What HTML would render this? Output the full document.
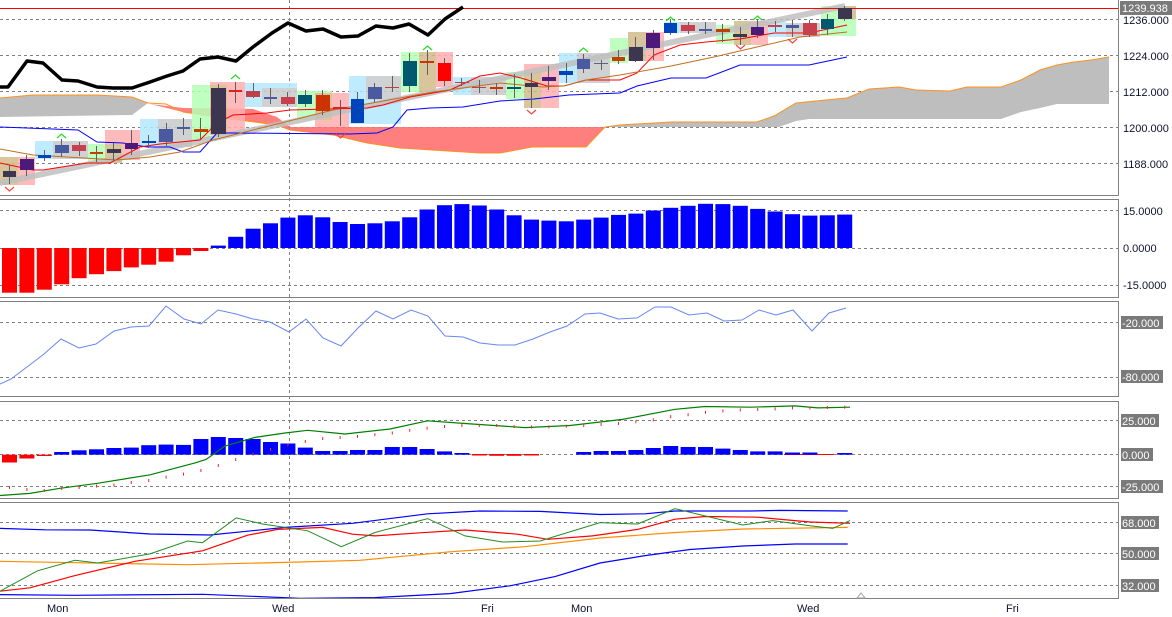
<!DOCTYPE html>
<html><head><meta charset="utf-8"><style>
html,body{margin:0;padding:0;background:#fff;width:1172px;height:617px;overflow:hidden}
svg{display:block}
text{font-family:"Liberation Sans",sans-serif;font-size:11px}
</style></head><body>
<svg width="1172" height="617" viewBox="0 0 1172 617" xmlns="http://www.w3.org/2000/svg">
<rect width="1172" height="617" fill="#fff"/>
<!-- grid -->
<g stroke="#808080" stroke-dasharray="3,3" stroke-width="1">
<line x1="0" y1="19.5" x2="1118" y2="19.5"/><line x1="0" y1="55.5" x2="1118" y2="55.5"/><line x1="0" y1="91.5" x2="1118" y2="91.5"/><line x1="0" y1="127.5" x2="1118" y2="127.5"/><line x1="0" y1="163.5" x2="1118" y2="163.5"/>
<line x1="0" y1="210.5" x2="1118" y2="210.5"/><line x1="0" y1="248.5" x2="1118" y2="248.5"/><line x1="0" y1="285.5" x2="1118" y2="285.5"/>
<line x1="0" y1="322.5" x2="1118" y2="322.5"/><line x1="0" y1="377.5" x2="1118" y2="377.5"/>
<line x1="0" y1="420.5" x2="1118" y2="420.5"/><line x1="0" y1="454.5" x2="1118" y2="454.5"/><line x1="0" y1="486.5" x2="1118" y2="486.5"/>
<line x1="0" y1="522.5" x2="1118" y2="522.5"/><line x1="0" y1="553.5" x2="1118" y2="553.5"/><line x1="0" y1="585.5" x2="1118" y2="585.5"/>
<line x1="289.5" y1="0" x2="289.5" y2="600"/>
</g>
<!-- clouds -->
<polygon fill="#bebebe" points="0,98 33,95 97,95 132,97 148,103 132,115 0,117"/>
<polygon fill="#ff7070" opacity="0.9" points="150,104 183,108 253,109 277,117 290,127 605,127 586,147 532,147 500,153 480,153 400,148 367,143 333,135 290,130 277,125 217,117 183,112"/>
<polyline fill="none" stroke="#ff9020" stroke-width="1" points="0,98 33,95 97,95 132,97 148,103 166,104 183,112 217,117 277,125 290,130 333,135 367,143 400,148 480,153 500,153 532,147 586,147 605,127"/>
<polygon fill="#bebebe" points="605,127 620,125 671,122 757,122 774,116 796,103 826,100 847,98 869,89 899,87 916,90 950,91 967,87 1001,87 1021,80 1040,70 1057,65 1074,62 1091,60 1109,57 1109,104 1057,104 1040,108 1021,112 1001,119 809,119 796,121 779,127"/>
<polyline fill="none" stroke="#ff9020" stroke-width="1" points="605,127 620,125 671,122 757,122 774,116 796,103 826,100 847,98 869,89 899,87 916,90 950,91 967,87 1001,87 1021,80 1040,70 1057,65 1074,62 1091,60 1109,57"/>
<polyline fill="none" stroke="#909090" stroke-width="1" points="0,117 132,115 148,103 0,0" opacity="0"/>
<!-- candle backgrounds -->
<g opacity="0.85">
<rect x="0" y="157" width="18" height="28" fill="#d2bc8a"/><rect x="18" y="157" width="17" height="28" fill="#ffb0b0"/>
<rect x="35" y="141" width="18" height="18" fill="#b4e8ff"/><rect x="53" y="141" width="35" height="18" fill="#c8cacc"/>
<rect x="88" y="144" width="17" height="19" fill="#b4ffb4"/><rect x="105" y="130" width="35" height="30" fill="#ffb0b0"/><rect x="105" y="144" width="17" height="19" fill="#d2bc8a"/>
<rect x="140" y="119" width="18" height="28" fill="#b4e8ff"/><rect x="158" y="119" width="34" height="28" fill="#c8cacc"/>
<rect x="192" y="85" width="18" height="55" fill="#b4ffb4"/><rect x="210" y="82" width="35" height="53" fill="#ffb0b0"/><rect x="210" y="85" width="17" height="50" fill="#d2bc8a"/>
<rect x="245" y="83" width="52" height="24" fill="#b4e8ff"/><rect x="262" y="88" width="35" height="19" fill="#c8cacc"/>
<rect x="297" y="91" width="35" height="29" fill="#b4ffb4"/><rect x="315" y="93" width="34" height="34" fill="#ffb0b0"/><rect x="315" y="93" width="17" height="27" fill="#d2bc8a"/>
<rect x="349" y="76" width="52" height="48" fill="#b4e8ff"/><rect x="366" y="76" width="35" height="24" fill="#c8cacc"/>
<rect x="401" y="52" width="35" height="40" fill="#b4ffb4"/><rect x="419" y="52" width="17" height="40" fill="#d2bc8a"/><rect x="436" y="52" width="17" height="35" fill="#ffb0b0"/>
<rect x="453" y="77" width="18" height="18" fill="#b4e8ff"/><rect x="471" y="77" width="40" height="18" fill="#c8cacc"/>
<rect x="506" y="72" width="18" height="27" fill="#b4ffb4"/><rect x="524" y="64" width="35" height="44" fill="#ffb0b0"/><rect x="524" y="72" width="17" height="36" fill="#d2bc8a"/>
<rect x="559" y="53" width="18" height="30" fill="#b4e8ff"/><rect x="577" y="53" width="33" height="30" fill="#c8cacc"/>
<rect x="610" y="38" width="18" height="25" fill="#b4ffb4"/><rect x="628" y="32" width="36" height="29" fill="#ffb0b0"/><rect x="628" y="32" width="18" height="29" fill="#d2bc8a"/>
<rect x="664" y="22" width="52" height="11" fill="#c8cacc"/><rect x="664" y="22" width="16" height="11" fill="#b4e8ff"/>
<rect x="716" y="25" width="18" height="19" fill="#b4ffb4"/><rect x="734" y="21" width="34" height="24" fill="#ffb0b0"/><rect x="734" y="21" width="17" height="24" fill="#d2bc8a"/>
<rect x="768" y="22" width="18" height="15" fill="#b4e8ff"/><rect x="786" y="23" width="34" height="14" fill="#c8cacc"/>
<rect x="821" y="6" width="35" height="30" fill="#b4ffb4"/><rect x="839" y="6" width="17" height="13" fill="#d2bc8a"/>
</g>
<!-- regression band -->
<line x1="0" y1="183" x2="845" y2="6" stroke="#c0c0c0" stroke-width="6" opacity="0.85"/>
<!-- MAs -->
<polyline fill="none" stroke="#0000ff" stroke-width="1" points="0,127 27,128 78,130 97,142 123,143 147,147 170,147 183,152 200,152 217,133 233,133 350,134 377,133 393,127 407,110 430,108 463,107 500,101 534,99 569,95 620,93 637,86 671,78 706,78 740,65 809,65 847,57"/>
<polyline fill="none" stroke="#ff0000" stroke-width="1" points="0,163 33,170 43,170 87,163 110,163 140,147 160,144 180,142 200,140 217,123 233,115 267,113 290,110 367,108 383,105 400,100 410,97 450,90 480,76 500,73 521,78 547,86 564,86 586,80 620,80 637,73 654,55 680,45 706,42 740,39 774,33 809,33 847,25"/>
<polyline fill="none" stroke="#c07020" stroke-width="1" points="0,149 33,155 67,157 117,160 150,157 180,152 213,140 233,135 333,110 400,98 433,92 500,83 543,87 564,86 586,80 620,75 671,66 714,57 757,47 800,37 847,32"/>
<line x1="0" y1="8.5" x2="1118" y2="8.5" stroke="#ff0000" stroke-width="1"/>
<polyline fill="none" stroke="#000" stroke-width="3.5" stroke-linejoin="round" points="0,87 8,87 27,61 43,63 62,80 78,81 97,87 113,88 132,88 150,82 167,76 183,71 200,59 218,57 236,61 253,47 272,33 288,23 306,31 323,29 341,37 358,36 376,26 393,28 409,24 428,35 445,19 463,7"/>
<!-- candles: wick then body -->
<g stroke="#606060" stroke-width="1">
<line x1="9.5" y1="165" x2="9.5" y2="184"/><line x1="26.5" y1="155" x2="26.5" y2="176"/><line x1="44.5" y1="150" x2="44.5" y2="161"/><line x1="61.5" y1="139" x2="61.5" y2="157"/><line x1="79.5" y1="142" x2="79.5" y2="156"/><line x1="96.5" y1="146" x2="96.5" y2="162"/><line x1="113.5" y1="143" x2="113.5" y2="160"/><line x1="131.5" y1="130" x2="131.5" y2="155"/><line x1="148.5" y1="135" x2="148.5" y2="148"/><line x1="166.5" y1="123" x2="166.5" y2="146"/><line x1="183.5" y1="118" x2="183.5" y2="135"/><line x1="200.5" y1="118" x2="200.5" y2="139"/><line x1="218.5" y1="84" x2="218.5" y2="137"/><line x1="235.5" y1="82" x2="235.5" y2="103"/><line x1="253.5" y1="83" x2="253.5" y2="98"/><line x1="270.5" y1="88" x2="270.5" y2="104"/><line x1="287.5" y1="92" x2="287.5" y2="106"/><line x1="305.5" y1="90" x2="305.5" y2="107"/><line x1="322.5" y1="90" x2="322.5" y2="115"/><line x1="340.5" y1="100" x2="340.5" y2="126"/><line x1="357.5" y1="92" x2="357.5" y2="123"/><line x1="374.5" y1="83" x2="374.5" y2="102"/><line x1="392.5" y1="76" x2="392.5" y2="92"/><line x1="409.5" y1="53" x2="409.5" y2="92"/><line x1="427.5" y1="50" x2="427.5" y2="75"/><line x1="444.5" y1="58" x2="444.5" y2="86"/><line x1="461.5" y1="78" x2="461.5" y2="86"/><line x1="479.5" y1="80" x2="479.5" y2="93"/><line x1="496.5" y1="83" x2="496.5" y2="95"/><line x1="514.5" y1="74" x2="514.5" y2="98"/><line x1="531.5" y1="73" x2="531.5" y2="108"/><line x1="548.5" y1="66" x2="548.5" y2="90"/><line x1="566.5" y1="63" x2="566.5" y2="83"/><line x1="583.5" y1="54" x2="583.5" y2="73"/><line x1="601.5" y1="60" x2="601.5" y2="70"/><line x1="618.5" y1="50" x2="618.5" y2="64"/><line x1="635.5" y1="37" x2="635.5" y2="62"/><line x1="653.5" y1="30" x2="653.5" y2="60"/><line x1="670.5" y1="19" x2="670.5" y2="35"/><line x1="688.5" y1="22" x2="688.5" y2="34"/><line x1="705.5" y1="22" x2="705.5" y2="34"/><line x1="722.5" y1="24" x2="722.5" y2="42"/><line x1="740.5" y1="27" x2="740.5" y2="45"/><line x1="757.5" y1="20" x2="757.5" y2="38"/><line x1="775.5" y1="21" x2="775.5" y2="32"/><line x1="792.5" y1="20" x2="792.5" y2="37"/><line x1="809.5" y1="20" x2="809.5" y2="37"/><line x1="827.5" y1="14" x2="827.5" y2="35"/><line x1="844.5" y1="6" x2="844.5" y2="21"/>
</g>
<g>
<rect x="3" y="171" width="13" height="6" fill="#3c3650"/><rect x="20" y="159" width="14" height="11" fill="#4b1a7a"/><rect x="38" y="155" width="13" height="3" fill="#0044bb"/><rect x="55" y="145" width="14" height="8" fill="#4a5aa0"/><rect x="72" y="145" width="14" height="6" fill="#c84050"/><rect x="90" y="152" width="13" height="2" fill="#c04000"/><rect x="107" y="149" width="14" height="4" fill="#3c3650"/><rect x="125" y="143" width="13" height="6" fill="#4b1a7a"/><rect x="142" y="141" width="14" height="2" fill="#0044bb"/><rect x="159" y="129" width="14" height="13" fill="#4a5aa0"/><rect x="177" y="127" width="13" height="2" fill="#4a5aa0"/><rect x="194" y="129" width="14" height="3" fill="#c04000"/><rect x="211" y="88" width="15" height="46" fill="#3c3650"/><rect x="229" y="90" width="13" height="2" fill="#e02020"/><rect x="246" y="91" width="14" height="6" fill="#c0404a"/><rect x="264" y="97" width="13" height="2" fill="#4a5aa0"/><rect x="281" y="97" width="14" height="7" fill="#c84050"/><rect x="298" y="95" width="14" height="9" fill="#005870"/><rect x="316" y="95" width="14" height="16" fill="#cc3300"/><rect x="333" y="107" width="14" height="2" fill="#e02020"/><rect x="351" y="99" width="13" height="24" fill="#0044bb"/><rect x="368" y="87" width="14" height="12" fill="#4a5aa0"/><rect x="385" y="87" width="14" height="1" fill="#c04040"/><rect x="403" y="61" width="14" height="25" fill="#005870"/><rect x="420" y="61" width="14" height="2" fill="#cc3300"/><rect x="438" y="63" width="13" height="18" fill="#ff0000"/><rect x="455" y="82" width="14" height="1" fill="#c04040"/><rect x="472" y="87" width="14" height="1" fill="#c04040"/><rect x="490" y="87" width="13" height="2" fill="#cc3300"/><rect x="507" y="87" width="14" height="2" fill="#005870"/><rect x="525" y="83" width="13" height="4" fill="#3c3650"/><rect x="542" y="77" width="14" height="4" fill="#4b1a7a"/><rect x="559" y="71" width="14" height="4" fill="#0044bb"/><rect x="577" y="59" width="13" height="10" fill="#4a5aa0"/><rect x="594" y="63" width="14" height="1" fill="#606080"/><rect x="612" y="57" width="13" height="4" fill="#c04000"/><rect x="629" y="47" width="14" height="14" fill="#3c3650"/><rect x="646" y="33" width="14" height="15" fill="#4b1a7a"/><rect x="664" y="23" width="13" height="10" fill="#0044bb"/><rect x="681" y="25" width="14" height="6" fill="#c84050"/><rect x="699" y="29" width="13" height="2" fill="#4a5aa0"/><rect x="716" y="29" width="14" height="3" fill="#c04000"/><rect x="733" y="34" width="14" height="3" fill="#3c3650"/><rect x="751" y="27" width="13" height="8" fill="#4b1a7a"/><rect x="768" y="25" width="14" height="2" fill="#c84050"/><rect x="786" y="25" width="13" height="3" fill="#4a5aa0"/><rect x="803" y="23" width="14" height="12" fill="#c84050"/><rect x="821" y="19" width="13" height="10" fill="#005870"/><rect x="838" y="8" width="14" height="11" fill="#3c3650"/>
</g>
<!-- arrows -->
<g fill="none" stroke-width="1.2">
<polyline stroke="#20e020" points="57,138 61.5,134 66,138"/><polyline stroke="#20e020" points="231,41 235.5,37 240,41" transform="translate(0,38)"/><polyline stroke="#20e020" points="423,50 427.5,46 432,50"/><polyline stroke="#20e020" points="579,52 583.5,48 588,52"/><polyline stroke="#20e020" points="666,21 670.5,17 675,21"/><polyline stroke="#20e020" points="753,20 757.5,16 762,20"/>
<polyline stroke="#ff4040" points="5,187 9.5,191 14,187"/><polyline stroke="#ff4040" points="336,134 340.5,138 345,134"/><polyline stroke="#ff4040" points="527,110 531.5,114 536,110"/><polyline stroke="#ff4040" points="736,45 740.5,49 745,45"/><polyline stroke="#ff4040" points="788,39 792.5,43 797,39"/>
</g>
<!-- panel 2 bars -->
<g fill="#ff0000">
<rect x="2" y="248" width="15" height="44.7"/><rect x="19.4" y="248" width="15" height="44.7"/><rect x="36.8" y="248" width="15" height="41.7"/><rect x="54.2" y="248" width="15" height="36.3"/><rect x="71.6" y="248" width="15" height="30.2"/><rect x="89" y="248" width="15" height="26.2"/><rect x="106.4" y="248" width="15" height="23.1"/><rect x="123.8" y="248" width="15" height="19.4"/><rect x="141.2" y="248" width="15" height="16.7"/><rect x="158.6" y="248" width="15" height="13.7"/><rect x="176" y="248" width="15" height="7.3"/><rect x="193.4" y="248" width="15" height="3"/>
</g>
<g fill="#0000ff">
<rect x="210.8" y="245.6" width="15" height="2.4"/><rect x="228.2" y="236.8" width="15" height="11.2"/><rect x="245.6" y="228.7" width="15" height="19.3"/><rect x="263" y="223.3" width="15" height="24.7"/><rect x="280.4" y="217.6" width="15" height="30.4"/><rect x="297.8" y="215.3" width="15" height="32.7"/><rect x="315.2" y="217.3" width="15" height="30.7"/><rect x="332.6" y="222" width="15" height="26"/><rect x="350" y="224" width="15" height="24"/><rect x="367.4" y="223.3" width="15" height="24.7"/><rect x="384.8" y="221.3" width="15" height="26.7"/><rect x="402.2" y="217.3" width="15" height="30.7"/><rect x="419.6" y="209.5" width="15" height="38.5"/><rect x="437" y="205.2" width="15" height="42.8"/><rect x="454.4" y="204.1" width="15" height="43.9"/><rect x="471.8" y="205.5" width="15" height="42.5"/><rect x="489.2" y="209.5" width="15" height="38.5"/><rect x="506.6" y="215.3" width="15" height="32.7"/><rect x="524" y="219.6" width="15" height="28.4"/><rect x="541.4" y="220.6" width="15" height="27.4"/><rect x="558.8" y="221.3" width="15" height="26.7"/><rect x="576.2" y="219.6" width="15" height="28.4"/><rect x="593.6" y="217.6" width="15" height="30.4"/><rect x="611" y="214.9" width="15" height="33.1"/><rect x="628.4" y="213.6" width="15" height="34.4"/><rect x="645.8" y="210.5" width="15" height="37.5"/><rect x="663.2" y="207.8" width="15" height="40.2"/><rect x="680.6" y="205.8" width="15" height="42.2"/><rect x="698" y="203.8" width="15" height="44.2"/><rect x="715.4" y="204.1" width="15" height="43.9"/><rect x="732.8" y="205.8" width="15" height="42.2"/><rect x="750.2" y="208.9" width="15" height="39.1"/><rect x="767.6" y="211.5" width="15" height="36.5"/><rect x="785" y="214.2" width="15" height="33.8"/><rect x="802.4" y="215.6" width="15" height="32.4"/><rect x="819.8" y="215.3" width="15" height="32.7"/><rect x="837.2" y="214.6" width="15" height="33.4"/>
</g>
<!-- panel 3 line -->
<polyline fill="none" stroke="#6688ee" stroke-width="1" points="0,384 11,379 27,367 44,354 61,339 79,348 96,344 114,331 131,327 149,326 166,306 184,319 201,324 218,310 236,314 253,319 270,322 289,332 306,319 323,338 341,346 358,328 376,311 393,319 411,310 428,316 445,336 463,337 480,343 498,345 515,345 533,339 550,332 567,326 585,314 600,313 618,319 637,318 655,307 671,307 689,315 707,313 724,321 742,320 759,310 776,315 793,310 812,331 829,313 846,308"/>
<!-- panel 4 -->
<g fill="#ff0000"><rect x="2" y="454.7" width="15" height="7.8"/><rect x="19.4" y="454.7" width="15" height="3.8"/><rect x="36.8" y="454.7" width="15" height="1.3"/><rect x="471.8" y="454" width="15" height="1.5"/><rect x="489.2" y="454" width="15" height="1.8"/><rect x="506.6" y="454" width="15" height="1.8"/><rect x="524" y="454" width="15" height="1.5"/><rect x="784" y="454" width="50" height="1"/></g>
<g fill="#0000ff">
<rect x="54.2" y="452" width="15" height="2.7"/><rect x="71.6" y="450.3" width="15" height="4.4"/><rect x="89" y="449.3" width="15" height="5.4"/><rect x="106.4" y="448" width="15" height="6.7"/><rect x="123.8" y="447.6" width="15" height="7.1"/><rect x="141.2" y="445.2" width="15" height="9.5"/><rect x="158.6" y="444.6" width="15" height="10.1"/><rect x="176" y="444.9" width="15" height="9.8"/><rect x="193.4" y="439" width="15" height="15.7"/><rect x="210.8" y="437" width="15" height="17.7"/><rect x="228.2" y="438" width="15" height="16.7"/><rect x="245.6" y="439" width="15" height="15.7"/><rect x="263" y="442" width="15" height="12.7"/><rect x="280.4" y="443.5" width="15" height="11.2"/><rect x="297.8" y="447.6" width="15" height="7.1"/><rect x="315.2" y="451" width="15" height="3.7"/><rect x="332.6" y="451" width="15" height="3.7"/><rect x="350" y="450" width="15" height="4.7"/><rect x="367.4" y="450" width="15" height="4.7"/><rect x="384.8" y="447" width="15" height="7.7"/><rect x="402.2" y="447" width="15" height="7.7"/><rect x="419.6" y="449" width="15" height="5.7"/><rect x="437" y="451.4" width="15" height="3.3"/><rect x="454.4" y="453" width="15" height="1.7"/><rect x="576.2" y="452" width="15" height="2.7"/><rect x="593.6" y="451" width="15" height="3.7"/><rect x="611" y="451" width="15" height="3.7"/><rect x="628.4" y="450" width="15" height="4.7"/><rect x="645.8" y="448" width="15" height="6.7"/><rect x="663.2" y="446" width="15" height="8.7"/><rect x="680.6" y="447" width="15" height="7.7"/><rect x="698" y="447" width="15" height="7.7"/><rect x="715.4" y="448.6" width="15" height="6.1"/><rect x="732.8" y="450" width="15" height="4.7"/><rect x="750.2" y="451.4" width="15" height="3.3"/><rect x="767.6" y="451.4" width="15" height="3.3"/><rect x="785" y="452.5" width="15" height="2.2"/><rect x="802.4" y="452.5" width="15" height="2.2"/><rect x="837.2" y="453" width="15" height="1.7"/>
</g>
<polyline fill="none" stroke="#008000" stroke-width="1.2" points="0,495.5 30,493.4 60,488.3 97.5,483.3 150,474.8 195,462.9 206,459.5 225,446 255,437.4 285,433 307.6,430.3 345,434 390,429 427.6,420.8 465,423.5 525,427.6 570,425.5 622.6,419.4 675,409.3 705,406.5 750,407.2 795,405.9 817.7,407.9 850,407.2"/>
<g fill="#ff2020">
<rect x="9" y="486" width="1" height="3"/><rect x="26.4" y="488" width="1" height="3"/><rect x="43.8" y="489" width="1" height="3"/><rect x="61.2" y="487" width="1" height="3"/><rect x="78.6" y="486" width="1" height="3"/><rect x="96" y="484.5" width="1" height="3"/><rect x="113.4" y="483.5" width="1" height="3"/><rect x="130.8" y="481" width="1" height="3"/><rect x="148.2" y="479" width="1" height="3"/><rect x="165.6" y="475.6" width="1" height="3"/><rect x="183" y="472.6" width="1" height="3"/><rect x="200.4" y="469" width="1" height="3"/><rect x="217.8" y="464" width="1" height="3"/><rect x="235.2" y="458" width="1" height="3"/><rect x="252.6" y="452.6" width="1" height="3"/><rect x="270" y="448" width="1" height="3"/><rect x="287.4" y="443.4" width="1" height="3"/><rect x="304.8" y="440" width="1" height="3"/><rect x="322.2" y="437" width="1" height="3"/><rect x="339.6" y="436" width="1" height="3"/><rect x="357" y="435" width="1" height="3"/><rect x="374.4" y="433.2" width="1" height="3"/><rect x="391.8" y="431.5" width="1" height="3"/><rect x="409.2" y="428.8" width="1" height="3"/><rect x="426.6" y="426.8" width="1" height="3"/><rect x="444" y="425" width="1" height="3"/><rect x="461.4" y="424" width="1" height="3"/><rect x="478.8" y="424" width="1" height="3"/><rect x="496.2" y="424" width="1" height="3"/><rect x="513.6" y="425" width="1" height="3"/><rect x="531" y="425.4" width="1" height="3"/><rect x="548.4" y="425.4" width="1" height="3"/><rect x="565.8" y="424.7" width="1" height="3"/><rect x="583.2" y="424" width="1" height="3"/><rect x="600.6" y="423" width="1" height="3"/><rect x="618" y="422" width="1" height="3"/><rect x="635.4" y="420.3" width="1" height="3"/><rect x="652.8" y="418.3" width="1" height="3"/><rect x="670.2" y="415.2" width="1" height="3"/><rect x="687.6" y="413.2" width="1" height="3"/><rect x="705" y="410.8" width="1" height="3"/><rect x="722.4" y="409.5" width="1" height="3"/><rect x="739.8" y="408.4" width="1" height="3"/><rect x="757.2" y="408" width="1" height="3"/><rect x="774.6" y="407.4" width="1" height="3"/><rect x="792" y="406.4" width="1" height="3"/><rect x="809.4" y="406.4" width="1" height="3"/><rect x="826.8" y="406" width="1" height="3"/><rect x="844.2" y="405.7" width="1" height="3"/>
</g>
<!-- panel 5 -->
<g fill="none" stroke-width="1.2">
<polyline stroke="#0000ff" points="0,528.4 45,529.8 90,530 150,534 210,535 285,527.4 352.6,523.3 427.6,513.8 480,511 540,511.4 600,514.5 645,513.8 675,511 750,511 780,510.4 847.7,511"/>
<polyline stroke="#0000ff" points="0,594.6 75,595.3 202.5,594.3 300,598.3 375,597.6 450,593.6 510,585.8 555,576.6 600,563 645,555.6 690,549.5 742.7,546 795,544 847.7,544"/>
<polyline stroke="#ff8c00" points="0,561.3 75,562.7 187.5,564.7 300,562 360,560.3 450,551.8 525,546.7 600,538 675,532.5 742.7,529 847.7,527.4"/>
<polyline stroke="#ff0000" points="0,591.2 30,587.8 75,575.6 135,561.3 202.5,550.8 247.6,535.2 277.6,529.4 322.6,527.4 352.6,534.2 375,535.9 420,532.8 465,530 517.6,534.2 547.6,539.3 592.6,535.9 637.6,529.4 675,519.2 705,516.5 757.7,517.2 810,522 850,523.3"/>
<polyline stroke="#228b22" stroke-width="1" points="0,591.2 37.5,570.8 75,560.3 97.5,563 150,553.9 187.5,541 202.5,542.7 236.3,517.9 262.5,524 307.6,530.8 341.3,546.7 375,532.5 427.6,518.6 465,535.9 502.6,542 540,541 600,522.6 637.6,524 675,508.7 742.7,525 772.7,520.6 810,525.7 832.7,528.4 850,520.6"/>
</g>
<!-- panel frames -->
<g fill="none" stroke="#808080" stroke-width="1">
<line x1="0" y1="195.5" x2="1118.5" y2="195.5"/><line x1="1118.5" y1="0" x2="1118.5" y2="195.5"/>
<rect x="-1" y="199.5" width="1119.5" height="98"/>
<rect x="-1" y="301.5" width="1119.5" height="95"/>
<rect x="-1" y="401.5" width="1119.5" height="97"/>
<rect x="-1" y="502.5" width="1119.5" height="96"/>
</g>
<polygon points="857,598 861,593 865,598" fill="none" stroke="#a0a0a0"/>
<!-- labels -->
<rect x="1120" y="1" width="52" height="14" fill="#7a7a7a"/>
<text x="1122" y="12" fill="#fff">1239.938</text>
<g fill="#101030">
<text x="1123" y="24">1236.000</text><text x="1123" y="60">1224.000</text><text x="1123" y="96">1212.000</text><text x="1123" y="132">1200.000</text><text x="1123" y="168">1188.000</text>
<text x="1123" y="215">15.0000</text><text x="1123" y="252">0.0000</text><text x="1123" y="289">-15.0000</text>
</g>
<g fill="#7a7a7a">
<rect x="1121" y="316" width="42" height="13"/><rect x="1121" y="370" width="42" height="13"/>
<rect x="1121" y="414" width="38" height="13"/><rect x="1121" y="448" width="32" height="13"/><rect x="1121" y="480" width="42" height="13"/>
<rect x="1121" y="516" width="38" height="13"/><rect x="1121" y="547" width="38" height="13"/><rect x="1121" y="579" width="38" height="13"/>
</g>
<g fill="#fff">
<text x="1122" y="327">-20.000</text><text x="1122" y="381">-80.000</text>
<text x="1122" y="425">25.000</text><text x="1122" y="459">0.000</text><text x="1122" y="491">-25.000</text>
<text x="1122" y="527">68.000</text><text x="1122" y="558">50.000</text><text x="1122" y="590">32.000</text>
</g>
<g fill="#101030">
<text x="47" y="612">Mon</text><text x="272" y="612">Wed</text><text x="481" y="612">Fri</text><text x="571" y="612">Mon</text><text x="797" y="612">Wed</text><text x="1006" y="612">Fri</text>
</g>
</svg>
</body></html>
